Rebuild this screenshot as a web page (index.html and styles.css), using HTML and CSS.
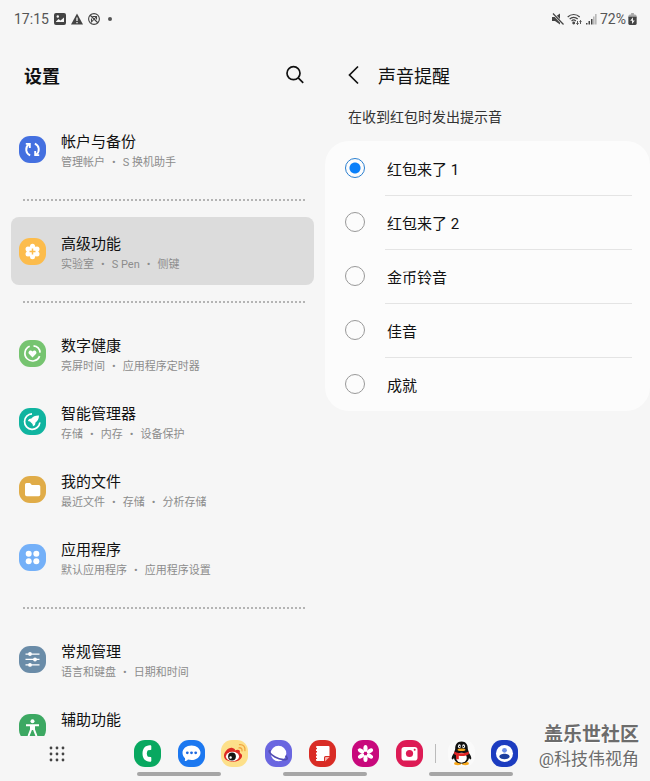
FILE: index.html
```
<!DOCTYPE html>
<html lang="zh-CN">
<head>
  <meta charset="UTF-8">
  <meta name="viewport" content="width=device-width, initial-scale=1.0">
  <title>设置</title>
  <link rel="stylesheet" href="styles.css">
</head>
<body>
  <!-- Status bar -->
  <header class="status-bar">
    <div class="status-group">
      <span class="status-text">17:15</span>
      <svg class="status-icon" viewBox="0 0 12 12"><rect width="12" height="12" rx="2" fill="#444"/><path d="M2 8.500l2.500-2.500 2 1.500 3.500-3v4.500h-8z" fill="#f6f6f6"/><circle cx="3.800" cy="3.500" r="1.200" fill="#f6f6f6"/></svg>
      <svg class="status-icon" viewBox="0 0 12 12"><path d="M6 .5L12 11.500H0z" fill="#444"/><path d="M6 4.500v3.500M6 9v1.300" stroke="#f6f6f6" stroke-width="1.300"/></svg>
      <svg class="status-icon" viewBox="0 0 12 12" fill="none" stroke="#444"><circle cx="6" cy="6" r="5.400" stroke-width="1.100"/><path d="M2 2l8 8M3 9.500l5.500-6M4.500 3.500h4v3M3.500 5.500v3" stroke-width="1.100"/></svg>
      <span class="status-dot"></span>
    </div>
    <div class="status-group status-right">
      <svg class="status-icon" viewBox="0 0 12 12"><path d="M0 4h3l5-3.500v11L3 8H0z" fill="#444"/><path d="M1 .5l10.500 11" stroke="#f6f6f6" stroke-width="2.500"/><path d="M1 .5l10.500 11" stroke="#444" stroke-width="1.200"/></svg>
      <svg class="status-icon wide" viewBox="0 0 15 12" fill="none" stroke="#444" stroke-width="1.200"><path d="M.7 4a8.500 8.500 0 0 1 12 0M2.700 6a5.600 5.600 0 0 1 8 0M4.600 8a3 3 0 0 1 4.200 0"/><circle cx="6.700" cy="10" r=".8" fill="#444"/><path d="M10.500 8v3.500M9.300 10.300l1.200 1.200 1.200-1.200M13.500 11V7.500M12.500 8.600l1-1.100 1 1.100" stroke-width=".9"/></svg>
      <svg class="status-icon" viewBox="0 0 12 12"><path d="M1 10h1.500v1.500H1zM3.500 8H5v3.500H3.500zM6 6h1.500v5.500H6z" fill="#444"/><path d="M8.200 3.500h1.300v8H8.200zM10.200 1h1.300v10.500h-1.300z" fill="#aaa"/></svg>
      <span class="status-text">72%</span>
      <svg class="status-icon battery" viewBox="0 0 9 13"><path d="M3 0h3v1.500h1.500L9 3v2H0V3l1.500-1.500H3z" fill="#aaa"/><path d="M0 4h9v7a2 2 0 0 1-2 2H2a2 2 0 0 1-2-2z" fill="#444"/><path d="M5 4.500L2 8.500h2V12l3-4H5z" fill="#f6f6f6"/></svg>
    </div>
  </header>

  <main class="panes">
    <!-- Settings list -->
    <section class="pane">
      <div class="pane-header">
        <h1 class="settings-title">设置</h1>
        <button type="button" class="icon-btn search-btn" aria-label="搜索">
          <svg viewBox="0 0 20 20" fill="none" stroke="#111" stroke-width="1.700"><circle cx="8.500" cy="8.200" r="6.500"/><path d="M13.200 12.900l5 4.900"/></svg>
        </button>
      </div>
      <nav class="settings-list">
        <a href="#" class="item">
          <svg class="tile blue" viewBox="0 0 27 27" fill="none" stroke="#fff" stroke-width="1.900"><path d="M11.200 19.300C6.600 17.500 5.800 11.500 9.800 8.300M15.800 7.700c4.600 1.800 5.400 7.800 1.400 11"/><path d="M6.800 7.900h4v4M20.200 19.100h-4v-4"/></svg>
          <span class="item-text"><span class="item-title">帐户与备份</span><span class="item-sub">管理帐户<i>•</i>S 换机助手</span></span>
        </a>
        <hr class="dots">
        <a href="#" class="item active">
          <svg class="tile amber" viewBox="0 0 27 27"><g fill="#fff"><circle cx="13.500" cy="13.500" r="5.800"/><circle cx="13.500" cy="8.300" r="2.500"/><circle cx="18" cy="10.900" r="2.500"/><circle cx="18" cy="16.100" r="2.500"/><circle cx="13.500" cy="18.700" r="2.500"/><circle cx="9" cy="16.100" r="2.500"/><circle cx="9" cy="10.900" r="2.500"/></g><path d="M13.500 10.500v6M10.500 13.500h6" stroke="#fcbc4c" stroke-width="1.500"/></svg>
          <span class="item-text"><span class="item-title">高级功能</span><span class="item-sub">实验室<i>•</i>S Pen<i>•</i>侧键</span></span>
        </a>
        <hr class="dots">
        <a href="#" class="item">
          <svg class="tile green" viewBox="0 0 27 27"><path d="M10.700 6.300a7.600 7.600 0 1 0 9.900 9.800M14.500 5.900a7.600 7.600 0 0 1 6.600 6.700" fill="none" stroke="#fff" stroke-width="1.700"/><path d="M13.500 17.500l-3.400-3.400c-1.800-2 1.200-5.100 3.400-2.600 2.200-2.500 5.200.6 3.400 2.600z" fill="#fff"/></svg>
          <span class="item-text"><span class="item-title">数字健康</span><span class="item-sub">亮屏时间<i>•</i>应用程序定时器</span></span>
        </a>
        <a href="#" class="item">
          <svg class="tile teal" viewBox="0 0 27 27"><path d="M13 5.900a7.700 7.700 0 1 0 7.900 8.600" fill="none" stroke="#fff" stroke-width="1.700"/><path d="M20 7.500c-3.500-.2-6 1-7.600 3l-2.300.5-1.300 2 2.200.5 2.500 2.500.5 2.200 2-1.300.5-2.300c2-1.600 3.500-3.900 3.500-7.100z" fill="#fff"/></svg>
          <span class="item-text"><span class="item-title">智能管理器</span><span class="item-sub">存储<i>•</i>内存<i>•</i>设备保护</span></span>
        </a>
        <a href="#" class="item">
          <svg class="tile gold" viewBox="0 0 27 27"><path d="M6 8.500A1.500 1.500 0 0 1 7.500 7H11l1.800 2h7A1.500 1.500 0 0 1 21.300 10.500v8a1.700 1.700 0 0 1-1.700 1.700H7.700A1.700 1.700 0 0 1 6 18.500z" fill="#fff"/></svg>
          <span class="item-text"><span class="item-title">我的文件</span><span class="item-sub">最近文件<i>•</i>存储<i>•</i>分析存储</span></span>
        </a>
        <a href="#" class="item">
          <svg class="tile sky" viewBox="0 0 27 27" fill="#fff"><circle cx="9.700" cy="9.700" r="3"/><circle cx="17.300" cy="9.700" r="3"/><circle cx="9.700" cy="17.300" r="3"/><circle cx="17.300" cy="17.300" r="3"/></svg>
          <span class="item-text"><span class="item-title">应用程序</span><span class="item-sub">默认应用程序<i>•</i>应用程序设置</span></span>
        </a>
        <hr class="dots">
        <a href="#" class="item">
          <svg class="tile slate" viewBox="0 0 27 27" fill="#fff"><path d="M6.500 7.400h14v1.300h-14zM6.500 12.800h14v1.300h-14zM6.500 18.200h14v1.300h-14z"/><circle cx="11" cy="8" r="1.900"/><circle cx="16" cy="13.500" r="1.900"/><circle cx="11" cy="18.900" r="1.900"/></svg>
          <span class="item-text"><span class="item-title">常规管理</span><span class="item-sub">语言和键盘<i>•</i>日期和时间</span></span>
        </a>
        <a href="#" class="item">
          <svg class="tile leaf" viewBox="0 0 27 27"><circle cx="13.500" cy="7.200" r="2" fill="#fff"/><path d="M7 11.200h13M13.500 11v5M12 11.500v4L9.500 22M15 11.500v4l2.500 6.500" fill="none" stroke="#fff" stroke-width="2"/></svg>
          <span class="item-text"><span class="item-title">辅助功能</span></span>
        </a>
      </nav>
    </section>

    <!-- Sound options -->
    <section class="pane">
      <div class="pane-header detail-header">
        <button type="button" class="icon-btn" aria-label="返回">
          <svg viewBox="0 0 20 20" fill="none" stroke="#111" stroke-width="1.700"><path d="M14 1.500L5.500 10l8.500 8.500"/></svg>
        </button>
        <h2 class="detail-title">声音提醒</h2>
      </div>
      <p class="hint" id="hint">在收到红包时发出提示音</p>
      <div class="card" role="radiogroup" aria-labelledby="hint">
        <div class="option">
          <input type="radio" id="tone1" name="tone" checked>
          <label for="tone1">红包来了 1</label>
        </div>
        <div class="option">
          <input type="radio" id="tone2" name="tone">
          <label for="tone2">红包来了 2</label>
        </div>
        <div class="option">
          <input type="radio" id="tone3" name="tone">
          <label for="tone3">金币铃音</label>
        </div>
        <div class="option">
          <input type="radio" id="tone4" name="tone">
          <label for="tone4">佳音</label>
        </div>
        <div class="option">
          <input type="radio" id="tone5" name="tone">
          <label for="tone5">成就</label>
        </div>
      </div>
    </section>
  </main>

  <!-- Taskbar -->
  <footer class="dock">
    <div class="dock-row">
      <button type="button" class="launcher" aria-label="所有应用">
        <svg viewBox="0 0 18 18" fill="#444"><circle cx="3" cy="3" r="1.400"/><circle cx="9" cy="3" r="1.400"/><circle cx="15" cy="3" r="1.400"/><circle cx="3" cy="9" r="1.400"/><circle cx="9" cy="9" r="1.400"/><circle cx="15" cy="9" r="1.400"/><circle cx="3" cy="15" r="1.400"/><circle cx="9" cy="15" r="1.400"/><circle cx="15" cy="15" r="1.400"/></svg>
      </button>
      <div class="apps">
        <button type="button" class="app" aria-label="电话">
          <svg class="tile phone" viewBox="0 0 27 27"><path d="M16.800 5.300c-5.300-.5-8.300 3.200-8.300 8.200s3 8.700 8.300 8.200l.5-.6v-3.600l-.6-.6-2.800-.2c-1.500-1.700-1.500-4.700 0-6.400l2.800-.2.6-.6V5.900z" fill="#fff"/></svg>
        </button>
        <button type="button" class="app" aria-label="信息">
          <svg class="tile chat" viewBox="0 0 27 27"><path d="M13.500 5.500c5 0 9 3.200 9 7.200s-4 7.300-9 7.300c-1.300 0-2.400-.2-3.500-.5-1 1-2 1.500-3.300 1.500.5-.9.500-1.800.3-2.800-1.600-1.400-2.500-3.300-2.500-5.500 0-4 4-7.200 9-7.200z" fill="#fff"/><g fill="#1d69e0"><circle cx="9.300" cy="12.800" r="1.400"/><circle cx="13.500" cy="12.800" r="1.400"/><circle cx="17.700" cy="12.800" r="1.400"/></g></svg>
        </button>
        <button type="button" class="app" aria-label="微博">
          <svg class="tile weibo" viewBox="0 0 27 27"><path d="M11.500 8c-4-1-8.500 4-8.500 8 0 7 16 8 18 .5.5-2-1-3-2.200-3.500 1-3-1.800-4-5-2.500.6-1.500-.3-2-2.300-2.500z" fill="#dc2b25"/><ellipse cx="11.500" cy="16.500" rx="6.600" ry="4.700" fill="#fff"/><circle cx="11" cy="16.500" r="3.900" fill="#151515"/><circle cx="9.600" cy="17.500" r="1.200" fill="#fff"/><path d="M18 7.800c2.200-.3 3.300 1 3 3M18.500 4.700c4-.3 6 2.300 5.400 6" fill="none" stroke="#f0a541" stroke-width="1.300" stroke-linecap="round"/></svg>
        </button>
        <button type="button" class="app" aria-label="浏览器">
          <svg class="tile browser" viewBox="0 0 27 27"><circle cx="13.500" cy="13.500" r="7.800" fill="#fff"/><path d="M5.700 11C2.500 9.500 4.500 14 10 17s12.500 3.500 12.200 1.300c-.1-.8-.8-1.700-1.700-2.600" fill="none" stroke="#514cb0" stroke-width="1.700"/></svg>
        </button>
        <button type="button" class="app" aria-label="笔记">
          <svg class="tile notes" viewBox="0 0 27 27"><path d="M8 6h11.500a1 1 0 0 1 1 1v9h-4a1.500 1.500 0 0 0-1.500 1.500V21H8a1 1 0 0 1-1-1V7a1 1 0 0 1 1-1z" fill="#fff"/><path d="M20.500 17L16 21.500V18a1 1 0 0 1 1-1z" fill="#f7b0aa"/><path d="M5.500 8.500H8M5.500 11.800H8M5.500 15.100H8M5.500 18.400H8" stroke="#d92c25" stroke-width="1.400"/></svg>
        </button>
        <button type="button" class="app" aria-label="相册">
          <svg class="tile gallery" viewBox="0 0 27 27"><g fill="#fff"><ellipse cx="13.500" cy="8.500" rx="2.100" ry="3.500"/><ellipse cx="13.500" cy="18.500" rx="2.100" ry="3.500"/><ellipse cx="13.500" cy="8.500" rx="2.100" ry="3.500" transform="rotate(60 13.500 13.500)"/><ellipse cx="13.500" cy="18.500" rx="2.100" ry="3.500" transform="rotate(60 13.500 13.500)"/><ellipse cx="13.500" cy="8.500" rx="2.100" ry="3.500" transform="rotate(120 13.500 13.500)"/><ellipse cx="13.500" cy="18.500" rx="2.100" ry="3.500" transform="rotate(120 13.500 13.500)"/></g><circle cx="13.500" cy="13.500" r="1.700" fill="#c8087c"/></svg>
        </button>
        <button type="button" class="app" aria-label="相机">
          <svg class="tile camera" viewBox="0 0 27 27"><rect x="5.500" y="7" width="16" height="13.500" rx="2.800" fill="#fff"/><circle cx="13.500" cy="13.500" r="3.600" fill="#dd1b55"/><circle cx="18.700" cy="9.800" r="1" fill="#dd1b55"/></svg>
        </button>
      </div>
      <span class="dock-sep"></span>
      <div class="recents">
        <button type="button" class="app" aria-label="QQ">
          <svg class="tile qq" viewBox="0 0 27 27"><ellipse cx="9.700" cy="23.500" rx="3.600" ry="1.700" fill="#f7a81b"/><ellipse cx="17.300" cy="23.500" rx="3.600" ry="1.700" fill="#f7a81b"/><path d="M13.500 1.500c-4.500 0-6.500 3.300-6.300 7.500L6 13c-2 2.500-2.800 5.500-2 6.300.6.4 1.500-.6 2-1.300.5 3.300 3.500 5.500 7.500 5.500s7-2.200 7.500-5.500c.5.7 1.400 1.700 2 1.300.8-.8 0-3.800-2-6.300L19.800 9c.2-4.200-1.800-7.500-6.300-7.500z" fill="#111"/><ellipse cx="13.500" cy="17.800" rx="5.300" ry="5" fill="#fff"/><ellipse cx="11.400" cy="6.300" rx="1.400" ry="2" fill="#fff"/><ellipse cx="15.600" cy="6.300" rx="1.400" ry="2" fill="#fff"/><circle cx="11.700" cy="6.500" r=".7"/><circle cx="15.300" cy="6.500" r=".7"/><ellipse cx="13.500" cy="9.800" rx="4" ry="1.300" fill="#f7a81b"/><path d="M6.200 11.500c4 2.400 10.600 2.400 14.600 0v2.700c-3 1.700-6.500 2.200-10 1.600v3.400H8v-4.200l-1.800-.8z" fill="#e02626"/></svg>
        </button>
        <button type="button" class="app" aria-label="社区">
          <svg class="tile member" viewBox="0 0 27 27"><circle cx="13.500" cy="13.500" r="8.500" fill="#fff"/><circle cx="13.500" cy="10.300" r="2.400" fill="#6d8fe8"/><path d="M8.300 17c0-4.400 10.400-4.400 10.400 0-2 3-8.400 3-10.400 0z" fill="#1d3f9f"/></svg>
        </button>
      </div>
    </div>
    <div class="handles"><span></span><span></span><span></span></div>
  </footer>

  <div class="watermark">
    <strong>盖乐世社区</strong>
    <span>@科技伟视角</span>
  </div>
</body>
</html>
```
FILE: styles.css
```
* {
  box-sizing: border-box;
}

body {
  margin: 0;
  height: 100vh;
  display: flex;
  flex-direction: column;
  overflow: hidden;
  background-color: #f6f6f6;
  color: #111;
  font-family: Roboto, "Noto Sans CJK SC", sans-serif;
  font-size: 15px;
}

h1, h2, p {
  margin: 0;
}

button {
  padding: 0;
  border: none;
  background: none;
  cursor: pointer;
}

svg {
  display: block;
}

/* status bar */
.status-bar {
  display: flex;
  justify-content: space-between;
  height: 38px;
  padding: 0 13px 0 14px;
}

.status-group {
  display: flex;
  align-items: center;
  gap: 5px;
}

.status-right {
  gap: 3px;
}

.status-text {
  font-size: 14px;
  color: #555;
}

.status-icon {
  width: 12px;
  height: 12px;
}

.status-icon.wide {
  width: 15px;
}

.status-icon.battery {
  width: 9px;
  margin-left: -1px;
}

.status-dot {
  width: 4px;
  height: 4px;
  margin-left: 3px;
  border-radius: 50%;
  background-color: #555;
}

/* two panes */
.panes {
  flex: 1;
  min-height: 0;
  display: grid;
  grid-template-columns: 1fr 1fr;
  overflow: hidden;
}

.pane {
  min-width: 0;
  padding-top: 5px;
}

.pane-header {
  display: flex;
  align-items: center;
  justify-content: space-between;
  height: 64px;
  padding: 0 20px 0 24px;
}

.detail-header {
  justify-content: flex-start;
  gap: 14px;
  padding-left: 19px;
}

.settings-title {
  font-size: 18px;
  font-weight: 700;
}

.detail-title {
  font-size: 18px;
  font-weight: 400;
}

.icon-btn svg {
  width: 20px;
  height: 20px;
}

.settings-list {
  padding: 8px 11px 0;
}

.item {
  display: flex;
  align-items: center;
  gap: 15px;
  height: 68px;
  padding: 0 8px;
  border-radius: 8px;
  color: #111;
  text-decoration: none;
}

.item.active {
  background-color: #dcdcdc;
}

.item-text {
  display: flex;
  flex-direction: column;
  height: 48px;
  padding-top: 7px;
}

.item-title {
  line-height: 21px;
}

.item-sub {
  font-size: 11px;
  line-height: 20px;
  color: #8c8c8c;
}

.item-sub i {
  margin: 0 7px;
  font-style: normal;
}

.dots {
  margin: 16px 9px 16px 12px;
  border: none;
  border-top: 2px dotted #b4b4b4;
}

/* icon tiles */
.tile {
  width: 27px;
  height: 27px;
  flex: none;
  border-radius: 11px;
}

.blue { background-color: #4470e0; }
.amber { background-color: #fcbc4c; }
.green { background-color: #76c470; }
.teal { background-color: #10b4a0; }
.gold { background-color: #e0ac48; }
.sky { background-color: #74b0f8; }
.slate { background-color: #6a8ca8; }
.leaf { background-color: #3ca862; }
.phone { background-color: #08a860; }
.chat { background-color: #1c78f0; }
.weibo { background-color: #fde08a; }
.browser { background-color: #6a66e0; }
.notes { background-color: #d92c25; }
.gallery { background-color: #c8087c; }
.camera { background-color: #dd1b55; }
.qq { background-color: #fafafa; }
.member { background-color: #1c3cc0; }

/* sound options */
.hint {
  padding: 1px 23px 0;
  font-size: 14px;
  line-height: 18px;
  color: #333;
}

.card {
  margin-top: 15px;
  border-radius: 24px;
  background-color: #fcfcfc;
}

.option {
  display: flex;
  align-items: center;
  height: 54px;
  padding: 0 18px 0 20px;
}

.option input {
  appearance: none;
  width: 20px;
  height: 20px;
  margin: 0 20px 0 0;
  border: 1px solid #999;
  border-radius: 50%;
}

.option input:checked {
  border-color: #2a7fd0;
  background: radial-gradient(circle, #0a80fa 5px, transparent 6px);
}

.option label {
  flex: 1;
  padding: 4px 0 0 2px;
  line-height: 50px;
}

.option:not(:last-child) label {
  border-bottom: 1px solid #e4e4e4;
}

/* taskbar */
.dock {
  padding: 4px 0 5px;
}

.dock-row {
  display: flex;
  align-items: center;
  padding-left: 48px;
}

.launcher {
  margin-right: 68px;
}

.launcher svg {
  width: 18px;
  height: 18px;
}

.apps {
  display: flex;
  justify-content: space-between;
  width: 48%;
}

.dock-sep {
  width: 1px;
  height: 19px;
  margin: 0 12px;
  background-color: #bbb;
}

.recents {
  display: flex;
  gap: 16px;
}

.handles {
  display: flex;
  gap: 62px;
  margin-top: 5px;
  padding-left: 137px;
}

.handles span {
  width: 84px;
  height: 4px;
  border-radius: 2px;
  background-color: #a6a6a6;
}

/* signature laid over the corner */
.watermark {
  position: absolute;
  right: 11px;
  bottom: 9px;
  display: flex;
  flex-direction: column;
  align-items: flex-end;
  color: #6c6c6c;
  line-height: 25px;
  text-shadow: 1px 1px 0 #fff;
}

.watermark strong {
  font-size: 19px;
}

.watermark span {
  font-size: 17px;
}
```
